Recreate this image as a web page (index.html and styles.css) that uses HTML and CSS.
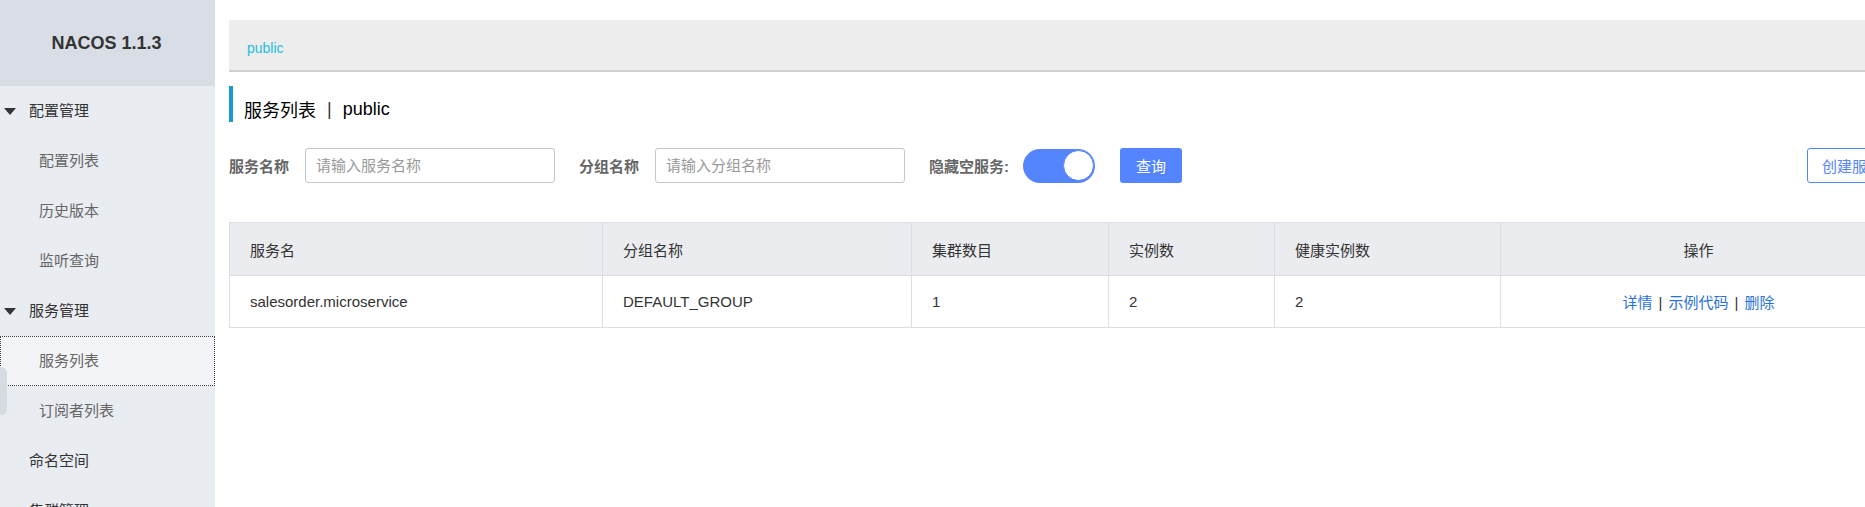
FILE: index.html
```html
<!DOCTYPE html>
<html lang="zh-CN">
<head>
<meta charset="utf-8">
<title>Nacos</title>
<link rel="stylesheet" href="styles.css">
</head>
<body>
<div class="layout">
  <aside class="sidebar">
    <div class="brand">NACOS 1.1.3</div>
    <ul class="menu">
      <li class="group"><span class="caret"></span>配置管理</li>
      <li class="sub">配置列表</li>
      <li class="sub">历史版本</li>
      <li class="sub">监听查询</li>
      <li class="group"><span class="caret"></span>服务管理</li>
      <li class="sub active">服务列表</li>
      <li class="sub">订阅者列表</li>
      <li class="group">命名空间</li>
      <li class="group">集群管理</li>
    </ul>
    <div class="collapse-tab"></div>
  </aside>
  <main class="main">
    <div class="ns-bar"><span class="ns-link">public</span></div>
    <h1 class="page-title">服务列表<span class="sep">|</span>public</h1>
    <div class="search-row">
      <div class="search-left">
        <label class="field-label">服务名称</label>
        <input class="field-input" type="text" placeholder="请输入服务名称">
        <label class="field-label gap">分组名称</label>
        <input class="field-input" type="text" placeholder="请输入分组名称">
        <label class="field-label gap">隐藏空服务:</label>
        <span class="switch"><span class="knob"></span></span>
        <button class="btn-primary" type="button">查询</button>
      </div>
      <button class="btn-outline" type="button">创建服务</button>
    </div>
    <table class="grid">
      <colgroup>
        <col class="c1"><col class="c2"><col class="c3"><col class="c4"><col class="c5"><col class="c6">
      </colgroup>
      <thead>
        <tr>
          <th>服务名</th>
          <th>分组名称</th>
          <th>集群数目</th>
          <th>实例数</th>
          <th>健康实例数</th>
          <th class="center">操作</th>
        </tr>
      </thead>
      <tbody>
        <tr>
          <td>salesorder.microservice</td>
          <td>DEFAULT_GROUP</td>
          <td>1</td>
          <td>2</td>
          <td>2</td>
          <td class="center"><a class="op">详情</a><span class="op-sep">|</span><a class="op">示例代码</a><span class="op-sep">|</span><a class="op">删除</a></td>
        </tr>
      </tbody>
    </table>
  </main>
</div>
</body>
</html>
```

FILE: styles.css
```css
* { box-sizing: border-box; }

html, body {
  margin: 0;
  padding: 0;
  height: 100%;
  overflow: hidden;
  background: #fff;
  font-family: "Liberation Sans", "Noto Sans CJK SC", sans-serif;
  color: #333;
}

.layout {
  display: flex;
  width: max-content;
  min-height: 507px;
}

.sidebar {
  position: relative;
  width: 215px;
  flex: none;
  background: #e9ecf1;
  min-height: 507px;
}

.brand {
  height: 86px;
  background: #d9dde5;
  display: flex;
  align-items: center;
  justify-content: center;
  font-size: 18px;
  font-weight: bold;
  color: #333;
  padding-right: 2px;
}

.menu {
  list-style: none;
  margin: 0;
  padding: 0;
}

.menu li {
  height: 50px;
  line-height: 50px;
  font-size: 15px;
  white-space: nowrap;
}

.group {
  display: flex;
  align-items: center;
  padding-left: 29px;
  color: #333;
  position: relative;
}

.caret {
  position: absolute;
  left: 4px;
  top: 22px;
  width: 0;
  height: 0;
  border-left: 6px solid transparent;
  border-right: 6px solid transparent;
  border-top: 7px solid #333;
}

.sub {
  padding-left: 39px;
  color: #666;
}

.sub.active {
  background: #f3f4f7;
  border: 1px dotted #444;
  padding-left: 38px;
  line-height: 48px;
}

.collapse-tab {
  position: absolute;
  left: 0;
  top: 367px;
  width: 7px;
  height: 48px;
  background: #d6dae1;
  border-radius: 0 6px 6px 0;
}

.main {
  width: 1681px;
  flex: none;
  padding: 20px 0 0 14px;
}

.ns-bar {
  height: 52px;
  background: #ededed;
  border-bottom: 2px solid #d0d0d0;
  padding-left: 18px;
  display: flex;
  align-items: center;
  padding-top: 6px;
}

.ns-link {
  color: #23bde0;
  font-size: 14px;
}

.page-title {
  margin: 14px 0 0 0;
  height: 36px;
  border-left: 4px solid #1a9bcd;
  padding-left: 11px;
  font-size: 18px;
  font-weight: normal;
  color: #000;
  display: flex;
  align-items: center;
  padding-top: 10px;
}

.sep {
  margin: 0 11px;
  color: #333;
}

.search-row {
  margin-top: 26px;
  display: flex;
  align-items: center;
  justify-content: space-between;
  height: 35px;
}

.search-left {
  display: flex;
  align-items: center;
}

.field-label {
  font-size: 15px;
  font-weight: bold;
  color: #666;
  margin-right: 16px;
}

.field-label.gap {
  margin-left: 24px;
}

.field-input {
  width: 250px;
  height: 35px;
  border: 1px solid #c4c6cf;
  border-radius: 3px;
  padding: 0 10px;
  font-family: inherit;
  font-size: 15px;
  color: #333;
  outline: none;
}

.field-input::placeholder {
  color: #999;
}

.switch {
  margin-left: -2px;
  width: 72px;
  height: 34px;
  border-radius: 17px;
  background: #5584ff;
  display: flex;
  align-items: center;
  justify-content: flex-end;
  padding-right: 1px;
}

.knob {
  width: 31px;
  height: 31px;
  border-radius: 50%;
  background: #fff;
  border: 1px solid #5584ff;
}

.btn-primary {
  margin-left: 25px;
  width: 62px;
  height: 35px;
  border: none;
  border-radius: 3px;
  background: #5584ff;
  color: #fff;
  font-family: inherit;
  font-size: 15px;
  padding: 0;
}

.btn-outline {
  width: 89px;
  height: 35px;
  border: 1px solid #5584ff;
  border-radius: 3px;
  background: #fff;
  color: #5584ff;
  font-family: inherit;
  font-size: 15px;
  padding: 0 0 0 14px;
  text-align: left;
  white-space: nowrap;
  overflow: hidden;
}

.grid {
  margin-top: 39px;
  width: 1667px;
  border-collapse: collapse;
  table-layout: fixed;
  font-size: 15px;
}

.c1 { width: 373px; }
.c2 { width: 309px; }
.c3 { width: 197px; }
.c4 { width: 166px; }
.c5 { width: 226px; }
.c6 { width: 396px; }

.grid th,
.grid td {
  border: 1px solid #dcdee3;
  padding: 0 20px;
  text-align: left;
  color: #333;
  white-space: nowrap;
}

.grid th {
  height: 53px;
  background: #ebecf0;
  font-weight: normal;
}

.grid td {
  height: 52px;
  background: #fff;
}

.grid .center {
  text-align: center;
}

.op {
  color: #2a73d6;
  cursor: pointer;
}

.op-sep {
  margin: 0 6px;
  color: #333;
}
```
